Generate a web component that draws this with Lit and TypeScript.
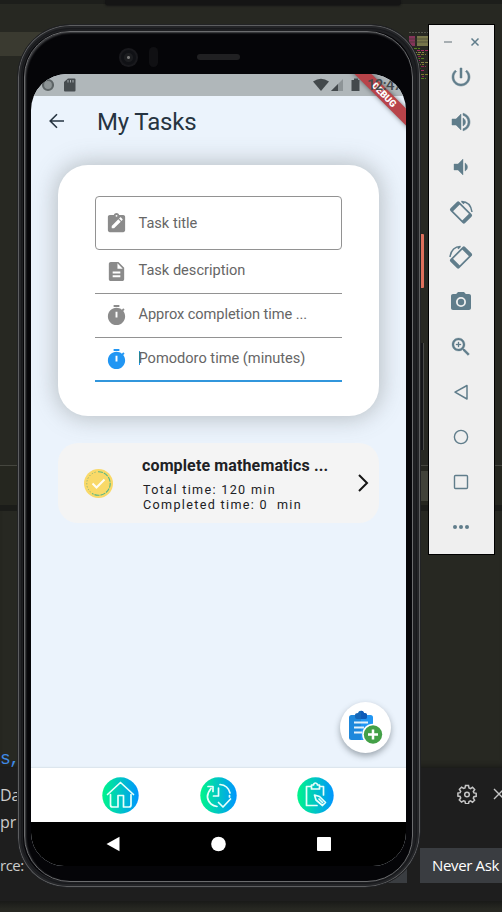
import { LitElement, html, svg, css } from "lit";
import { customElement } from "lit/decorators.js";

@customElement("editor-backdrop")
class EditorBackdrop extends LitElement {
  static styles = css`
    :host { display: grid; grid-template-rows: 4px 28px 24px 409px 46px 257px 133px 11px; height: 912px; background: #272822; overflow: hidden; font-family: "Open Sans", "Noto Sans", sans-serif; }
    .top { background: #1d1e1b; }
    .tip { width: 296px; height: 5px; margin-left: 105px; background: #151515; border-radius: 0 0 3px 3px; box-shadow: 0 1px 2px #151515; }
    .line { background: linear-gradient(90deg, #3a3a30 0 40px, #272822 60px); display: flex; justify-content: flex-end; align-items: flex-start; }
    .strip { background: #25261f; border-top: 1px solid #45463f; box-sizing: border-box; display: flex; justify-content: flex-end; align-items: center; border-bottom: 6px solid #1b1c19; }
    .block { width: 12px; height: 30px; margin-right: 70px; margin-top: 1px; background: #414239; }
    .code { display: flex; align-items: flex-end; color: #3f8be8; font: 18px/18px "Liberation Mono", monospace; box-shadow: inset 0 -5px 5px -3px #1a1a18; }
    .code span { letter-spacing: -1.500px; }
    .notice { background: #1e1e1e; color: #ccc; font-size: 16px; display: flex; justify-content: space-between; }
    .words { padding-top: 14px; line-height: 27px; white-space: nowrap; }
    .last { margin-top: 16px; font-size: 15px; letter-spacing: -.5px; }
    .side { width: 122px; display: flex; flex-direction: column; justify-content: space-between; }
    .tools { display: flex; padding: 16px 0 0 77px; gap: 16px; }
    .tools svg { flex: none; }
    .buttons { display: flex; gap: 13px; margin-bottom: 18px; }
    .prev { width: 27px; height: 35px; background: #3a3d41; }
    .never { flex: 1; height: 35px; background: #3a3d41; color: #fff; font-size: 15px; line-height: 35px; padding-left: 12px; white-space: nowrap; box-sizing: border-box; letter-spacing: -.35px; }
    .foot { background: linear-gradient(#191a18, #272822 8px); }
  `;
  render() {
    const colors = ["#8b294f", "#858349", "#568022", "#78792f", "#a12b60"];
    return html`
      <div class="top"><div class="tip"></div></div>
      <div></div>
      <div class="line">
        <svg width="96" height="52" viewBox="0 0 96 52">
          <path d="M3 .5h19" stroke="#56574e" stroke-dasharray="2 1"/>
          <path d="M3 4h6v10H3z" fill="#84345a"/>
          <path d="M11 4h11v10H11z" fill="#77764a"/>
          <path d="M3 7h19M3 10h19" stroke="#3a3a2c" stroke-width=".6"/>
          ${[...Array(16)].map((_, i) => svg`<path d=${`M${8 + (i * 3) % 6} ${16.500 + i * 2}h${6 + (i * 5) % 6}`} stroke=${colors[(i * 2 + 2) % 5]} stroke-width="1" stroke-dasharray="3 1"/>`)}
        </svg>
      </div>
      <div></div>
      <div class="strip"><div class="block"></div></div>
      <div class="code"><span>s,</span></div>
      <div class="notice">
        <div class="words"><div>Da</div><div>pr</div><div class="last">rce:</div></div>
        <div class="side">
          <div class="tools">
            <svg width="20" height="20" viewBox="0 0 20 20" fill="none" stroke="#c5c5c5" stroke-width="1.500">
              <path d="M8.500 1.500h3l.5 2.400 1.500.7 2-1.300 2.200 2.200-1.400 2 .6 1.400 2.300.4v3l-2.300.4-.6 1.500 1.300 2-2.100 2-2-1.300-1.500.6-.5 2.200h-3L8 17.400l-1.500-.6-2 1.300-2.200-2.100 1.400-2-.6-1.500-2.200-.4v-3l2.200-.4.6-1.400-1.300-2 2.200-2.200 2 1.300L8 3.900z"/>
              <circle cx="10" cy="10.500" r="2.300"/>
            </svg>
            <svg width="12" height="20" viewBox="0 0 12 20" stroke="#c5c5c5" stroke-width="1.400"><path d="M1 5l10 10M11 5L1 15"/></svg>
          </div>
          <div class="buttons"><div class="prev"></div><div class="never">Never Ask</div></div>
        </div>
      </div>
      <div class="foot"></div>`;
  }
}

const TIMER = "M15 1H9v2h6V1zm-4 13h2V8h-2v6zm8.030-6.610l1.420-1.420c-.43-.51-.9-.99-1.410-1.410l-1.420 1.420C16.070 4.740 14.120 4 12 4c-4.970 0-9 4.030-9 9s4.020 9 9 9 9-4.030 9-9c0-2.120-.74-4.070-1.970-5.610z";
const FIELDS = [
  { label: "Task title", kind: "outlined", icon: "M19 3h-4.180C14.400 1.840 13.300 1 12 1s-2.400.84-2.820 2H5c-1.100 0-2 .9-2 2v14c0 1.100.9 2 2 2h14c1.100 0 2-.9 2-2V5c0-1.100-.9-2-2-2zm-7 0a1 1 0 1 1 0 2 1 1 0 0 1 0-2zM7 17v-2.500l6.900-6.900 2.500 2.500L9.500 17H7zm11.200-8.700l-1 1-2.500-2.500 1-1c.3-.3.7-.3 1 0l1.500 1.500c.3.3.3.7 0 1z" },
  { label: "Task description", kind: "lined", icon: "M14 2H6c-1.100 0-2 .9-2 2v16c0 1.100.9 2 2 2h12c1.100 0 2-.9 2-2V8l-6-6zm2 16H8v-2h8v2zm0-4H8v-2h8v2zm-3-5V3.500L18.500 9H13z" },
  { label: "Approx completion time ...", kind: "lined", icon: TIMER },
  { label: "Pomodoro time (minutes)", kind: "active", icon: TIMER },
];

@customElement("task-screen")
class TaskScreen extends LitElement {
  static styles = css`
    :host { display: flex; flex-direction: column; width: 375px; height: 792px; position: relative; overflow: hidden; border-radius: 36px 36px 33px 33px; background: #ebf3fc; font-family: Roboto, sans-serif; color: #202124; }
    svg { display: block; flex: none; }
    .status { height: 22px; flex: none; background: #b0b7ba; display: flex; justify-content: space-between; }
    .clock { font: 500 15px/22px Roboto, sans-serif; color: #43494c; margin-left: 6px; letter-spacing: -.7px; }
    .right { display: flex; width: 93px; position: relative; z-index: 2; }
    .bar { height: 50px; flex: none; display: flex; align-items: center; padding-left: 17px; gap: 31px; box-sizing: border-box; }
    .bar h1 { font: 400 24px/30px Roboto, sans-serif; letter-spacing: -.15px; margin: 1px 0 0; color: #263441; }
    .form { margin: 19px 27px 0; height: 251px; box-sizing: border-box; padding: 31px 37px; border-radius: 30px; background: #fff; box-shadow: 0 0 22px 3px rgba(100,105,105,.36); }
    .field { box-sizing: border-box; display: flex; align-items: center; gap: 10.500px; padding-left: 10px; font-size: 14.600px; color: #666; white-space: nowrap; height: 44px; letter-spacing: 0; }
    .outlined { height: 54px; border: 1px solid #929292; border-radius: 4px; padding-left: 9px; }
    .lined { border-bottom: 1px solid #929292; padding-bottom: 3px; }
    .lined:nth-child(3) { letter-spacing: -.07px; }
    .lined svg, .active svg { position: relative; top: 1px; }
    .active { border-bottom: 2px solid #3196dc; padding-bottom: 2px; }
    .caret { width: 1.500px; height: 14px; margin: 0 -12px 0 0; background: #2196f3; }
    .task { margin: 27px 27px 0; height: 80px; border-radius: 20px; background: #f4f4f4; display: flex; align-items: center; }
    .task svg:first-child { margin-left: 26px; }
    .task svg:last-child { margin-left: -3px; }
    .info { width: 215px; margin-left: 30px; font-size: 12.600px; line-height: 14.500px; letter-spacing: 1.330px; white-space: pre; padding-top: 2px; flex: none; }
    .info b { display: block; font-size: 16px; line-height: 20px; letter-spacing: .13px; margin: 0 0 7px -1px; }
    .space { flex: 1; display: flex; justify-content: flex-end; align-items: flex-end; padding: 0 15px 15px 0; }
    .fab { width: 51px; height: 51px; border-radius: 50%; background: #fff; display: grid; place-items: center; box-shadow: 0 3px 6px rgba(60,70,80,.45); }
    .tabs { height: 54px; flex: none; background: #fff; box-shadow: 0 -1px 1px #dde6ee; display: flex; justify-content: space-between; align-items: center; padding: 0 72px 0 71px; }
    .nav { height: 44px; flex: none; background: #000; display: flex; justify-content: space-between; align-items: center; padding: 0 75px; }
    .debug { position: absolute; right: -53px; top: 14.500px; width: 150px; height: 12px; transform: rotate(45deg); background: #b84349; box-shadow: 0 0 5px rgba(0,0,0,.5); color: #fff; font: 900 9.500px/12px Roboto, sans-serif; text-align: center; }
  `;
  render() {
    const disc = (id: string, art: unknown) => html`<svg width="37" height="37" viewBox="0 0 37 37">
      <defs><linearGradient id=${id}><stop offset="0" stop-color="#00f58a"/><stop offset="1" stop-color="#0095ff"/></linearGradient></defs>
      <circle cx="18.500" cy="18.500" r="18.200" fill="url(#${id})"/>
      <g fill="none" stroke="#e9fffb" stroke-width="1.700" stroke-linejoin="round" stroke-linecap="round">${art}</g></svg>`;
    return html`
      <div class="status">
        <svg width="70" height="22" viewBox="0 0 70 22">
          <circle cx="17" cy="11" r="5" fill="#8c9395" stroke="#5d6466" stroke-width="2.200"/>
          <path d="M37 4.500h6.500q1 0 1 1v11q0 1-1 1h-9.500q-1 0-1-1V8z" fill="#474d50"/>
          <path d="M37 6v2.500M39.500 6v2.500M42 6v2.500" stroke="#a8afb2"/>
        </svg>
        <div class="right">
          <svg width="48" height="22" viewBox="0 0 48 22">
            <path d="M0 7.500Q8 2 16 7.500L8 17z" fill="#43494c"/>
            <path d="M30 5v12H18z" fill="#8d9497"/><path d="M25 10v7h-7z" fill="#43494c"/>
            <path d="M38.500 6H41V4.500h4V6h1.500v11h-8z" fill="#43494c"/>
          </svg>
          <span class="clock">12:47</span>
        </div>
      </div>
      <div class="bar">
        <svg width="18" height="18" viewBox="0 0 18 18" fill="none" stroke="#263441" stroke-width="1.600"><path d="M16 9H2.500M9 2.200L2.200 9 9 15.800"/></svg>
        <h1>My Tasks</h1>
      </div>
      <div class="form">
        ${FIELDS.map(f => html`<div class="field ${f.kind}">
          <svg width="23" height="23" viewBox="0 0 24 24" fill=${f.kind === "active" ? "#2196f3" : "#8b8b8b"} fill-rule="evenodd"><path d=${f.icon}></path></svg>
          ${f.kind === "active" ? html`<i class="caret"></i>` : ""}<span>${f.label}</span>
        </div>`)}
      </div>
      <div class="task">
        <svg width="29" height="29" viewBox="0 0 29 29" fill="none">
          <circle cx="14.500" cy="14.500" r="14.500" fill="#f9d968"/>
          <path d="M11.500 3.200A11.700 11.700 0 0 0 7 23.500" stroke="#79ad79" stroke-dasharray="1 2"/>
          <path d="M14 2.700A11.800 11.800 0 1 1 8 24.400" stroke="#58b785" stroke-width="1.100" stroke-dasharray="5 1"/>
          <path d="M8.500 14.500l4 4 8-8" stroke="#fffdf0" stroke-width="2"/>
        </svg>
        <div class="info"><b>complete mathematics ...</b><div>Total time: 120 min</div><div>Completed time: 0  min</div></div>
        <svg width="14" height="20" viewBox="0 0 14 20" fill="none" stroke="#151515" stroke-width="2"><path d="M4 2l8 8-8 8"/></svg>
      </div>
      <div class="space">
        <div class="fab">
          <svg width="35" height="35" viewBox="0 0 35 35">
            <path d="M3.500 5H13v25H3.500Q1 30 1 27.500v-20Q1 5 3.500 5z" fill="#1e88dc"/>
            <path d="M13 5h9.500Q25 5 25 7.500v20Q25 30 22.500 30H13z" fill="#2196f3"/>
            <path d="M7 5q0-2 3-2 .5-2.300 3-2.300T16 3q3 0 3 2v2q0 2-2 2H9Q7 9 7 7z" fill="#1467b8"/>
            <path d="M13 .7Q15.500.7 16 3q3 0 3 2v2q0 2-2 2h-4z" fill="#0d5bb8"/>
            <path d="M6 12.500h14M6 17.500h10M6 22.500h8" stroke="#e5f1fa" stroke-width="2"/>
            <circle cx="25" cy="24.500" r="10.800" fill="#fff"/><circle cx="25" cy="24.500" r="9.200" fill="#43a047"/>
            <path d="M25 19.500v10M20 24.500h10" stroke="#fff" stroke-width="2.500"/>
          </svg>
        </div>
      </div>
      <div class="tabs">
        ${disc("home", svg`<path d="M8.500 17.500V28q0 2 2 2h5.500V18.500h5.500V30h5.500q2 0 2-2V17.500M5.500 17.500L18.500 5.500l13 12"/>`)}
        ${disc("time", svg`<path d="M11 11.500Q4 20 11 27q2.500 2 6 2.500M20 7.500q8 .7 10 8.500M8 9.500h5v5M29.500 18.500v1.500M18.500 11v8h-5M18.500 25.500l4.500 4.500 7.500-8"/>`)}
        ${disc("edit", svg`<path d="M14.500 9.500H9.500V28.500H20M22.500 9.500h4V18M14.500 8h2q.3-2 2-2t2 2h2v4h-8zM17.500 18l1.500 5 6.500 5.500 3-3-6-6zM22 22l3.500 3.500"/>`)}
      </div>
      <div class="nav">
        <svg width="15" height="16" viewBox="0 0 15 16" fill="#fff"><path d="M13.500.8v14.400L.5 8z"/></svg>
        <svg width="16" height="16" viewBox="0 0 16 16" fill="#fff"><circle cx="7.500" cy="8" r="7.300"/></svg>
        <svg width="14" height="14" viewBox="0 0 14 14" fill="#fff"><rect width="14" height="14" rx="1"/></svg>
      </div>
      <div class="debug">DEBUG</div>`;
  }
}

@customElement("phone-frame")
class PhoneFrame extends LitElement {
  static styles = css`
    :host { display: block; width: 404px; height: 864px; box-sizing: border-box; border-radius: 53px 50px 56px 50px; background: #050508; border: 1px solid #222325; box-shadow: inset 0 0 0 1px #5d5e60, inset 0 0 0 3px #242528, inset 0 0 0 4px #18191c, inset -1px 0 0 6px #1e1f22; }
    .rim { padding: 49px 0 0 13px; position: relative; }
    .shell { position: absolute; inset: 6px 7px 5px 6px; border: 1px solid #6b6c6e; border-radius: 46px; background: #050508; box-shadow: inset 1px 1px 2px #47484b; }
    .top { position: absolute; left: 101px; top: 22px; width: 130px; display: flex; align-items: center; gap: 11px; z-index: 1; }
    .lens { width: 19px; height: 19px; border-radius: 50%; background: radial-gradient(#777 0 1px, #1c1d20 2px 4px, #101115 5px 7px, #19191d 8px); }
    .sensor { width: 9px; height: 20px; border-radius: 5px; background: #101013; }
    .speaker { width: 43px; height: 6px; margin-left: 28px; border-radius: 3px; background: #202022; flex: none; }
    .power, .volume { position: absolute; width: 3px; }
    .power { left: 403px; top: 209px; height: 54px; background: #df705c; border-radius: 0 1px 1px 0; }
    .volume { left: 403px; top: 318px; height: 107px; background: #151619; border-right: 1px solid #4b4c4a; box-sizing: border-box; }
  `;
  render() {
    return html`<div class="shell"></div><div class="power"></div><div class="volume"></div>
      <div class="top"><div class="lens"></div><div class="sensor"></div><div class="speaker"></div></div>
      <div class="rim"><task-screen></task-screen></div>`;
  }
}

@customElement("emulator-tools")
class EmulatorTools extends LitElement {
  static styles = css`
    :host { display: block; box-sizing: border-box; width: 67px; height: 531px; background: #efefef; border: 1px solid #000; }
    .window { height: 29px; display: flex; align-items: flex-end; justify-content: flex-end; gap: 19px; padding: 0 15px 8px 0; box-sizing: border-box; }
    .item { height: 45px; display: grid; place-items: center; padding-right: 1px; }
    svg { display: block; overflow: visible; }
  `;
  render() {
    const tilt = svg`<g transform="translate(12 12.500) rotate(-45)"><rect x="-5.500" y="-9.500" width="11" height="19" rx="1" fill="none" stroke="#607d8b" stroke-width="1.700"/><path d="M-5.500-8h11M-5.500 8h11" stroke="#607d8b" stroke-width="3"/></g><path d="M12.500 1.200L15 3.700M12.500 1.400Q21.500 1.500 23 12" fill="none" stroke="#607d8b" stroke-width="1.500"/>`;
    const icons = [
      svg`<path d="M13 3h-2v10h2V3zm4.830 2.170l-1.420 1.420C17.990 7.860 19 9.810 19 12c0 3.870-3.130 7-7 7s-7-3.130-7-7c0-2.190 1.010-4.140 2.580-5.420L6.170 5.170C4.230 6.820 3 9.260 3 12c0 4.970 4.030 9 9 9s9-4.030 9-9c0-2.740-1.230-5.180-3.170-6.830z" stroke="#607d8b" stroke-width=".5"/>`,
      svg`<path d="M3 9v6h4l5 5V4L7 9H3zm13.500 3c0-1.770-1.020-3.290-2.500-4.030v8.050c1.480-.73 2.500-2.250 2.500-4.020zM14 3.230v2.060c2.890.86 5 3.540 5 6.710s-2.110 5.850-5 6.710v2.060c4.010-.91 7-4.490 7-8.770s-2.990-7.860-7-8.770z" stroke="#607d8b" stroke-width=".5"/>`,
      svg`<path d="M18.500 12c0-1.770-1.020-3.290-2.500-4.030v8.050c1.480-.73 2.500-2.250 2.500-4.020zM5 9v6h4l5 5V4L9 9H5z" stroke="#607d8b" stroke-width=".4"/>`,
      tilt,
      svg`<g transform="matrix(-1 0 0 1 24 0)">${tilt}</g>`,
      svg`<path fill-rule="evenodd" d="M9 2L7.170 4H4c-1.100 0-2 .9-2 2v12c0 1.100.9 2 2 2h16c1.100 0 2-.9 2-2V6c0-1.100-.9-2-2-2h-3.170L15 2H9zm3 5a5 5 0 1 0 0 10 5 5 0 0 0 0-10z"/><circle cx="12" cy="12" r="3.200"/>`,
      svg`<path d="M15.500 14h-.79l-.28-.27C15.410 12.590 16 11.110 16 9.500 16 5.910 13.090 3 9.500 3S3 5.910 3 9.500 5.910 16 9.500 16c1.610 0 3.090-.59 4.230-1.570l.27.28v.79l5 4.990L20.490 19l-4.990-5zm-6 0C7.010 14 5 11.990 5 9.500S7.010 5 9.500 5 14 7.010 14 9.500 11.990 14 9.500 14zm2.500-4h-2v2H9v-2H7V9h2V7h1v2h2v1z" stroke="#607d8b" stroke-width=".3"/>`,
      svg`<path d="M18 5.500v13.500L6 12.200z" fill="none" stroke="#607d8b" stroke-width="1.500" stroke-linejoin="round"/>`,
      svg`<circle cx="12" cy="12" r="6.600" fill="none" stroke="#607d8b" stroke-width="1.400"/>`,
      svg`<rect x="5.500" y="5.500" width="13" height="13" rx="1" fill="none" stroke="#607d8b" stroke-width="1.400"/>`,
      svg`<circle cx="6" cy="12" r="2"/><circle cx="12" cy="12" r="2"/><circle cx="18" cy="12" r="2"/>`,
    ];
    return html`<div class="window">
        <svg width="8" height="8" viewBox="0 0 8 8"><path d="M0 4h8" stroke="#8f999e" stroke-width="1.500"/></svg>
        <svg width="8" height="8" viewBox="0 0 8 8"><path d="M.5.500l7 7M7.500.500l-7 7" stroke="#607d8b" stroke-width="1.500"/></svg>
      </div>${icons.map(i => html`<div class="item"><svg width="24" height="24" viewBox="0 0 24 24" fill="#607d8b">${i}</svg></div>`)}`;
  }
}

@customElement("app-root")
class AppRoot extends LitElement {
  static styles = css`
    :host { display: block; position: relative; width: 502px; height: 912px; overflow: hidden; }
    phone-frame { position: absolute; left: 17px; top: 24px; }
    emulator-tools { position: absolute; left: 428px; top: 24px; }
  `;
  render() {
    return html`<editor-backdrop></editor-backdrop><phone-frame></phone-frame><emulator-tools></emulator-tools>`;
  }
}
